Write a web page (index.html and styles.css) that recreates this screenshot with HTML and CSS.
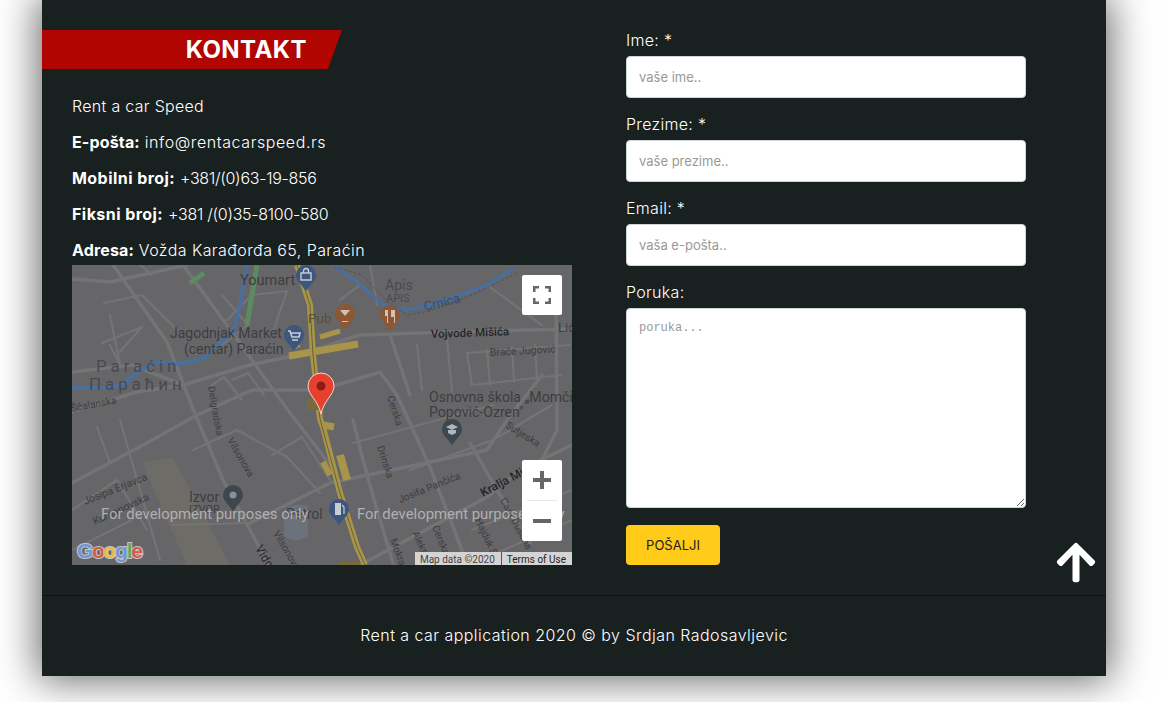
FILE: index.html
```html
<!DOCTYPE html>
<html lang="en">
<head>
  <meta charset="UTF-8" />
  <title>Kontakt - Rent a car Speed</title>
  <link rel="stylesheet" href="styles.css">
</head>
<body>
  <div class="page">
    <div class="content">
      <div class="info-col">
        <h2 class="section-title">KONTAKT</h2>
        <div class="info">
          <p>Rent a car Speed</p>
          <p><b class="tight">E-pošta:</b> <span class="wide">info@rentacarspeed.rs</span></p>
          <p><b>Mobilni broj:</b> <span class="num">+381/(0)63-19-856</span></p>
          <p><b>Fiksni broj:</b> <span class="num">+381 /(0)35-8100-580</span></p>
          <p><b class="tight">Adresa:</b> <span class="addr">Vožda Karađorđa 65, Paraćin</span></p>
          <div class="map">
            <svg class="map-canvas" width="500" height="300" viewBox="0 0 500 300">
              <rect width="500" height="300" fill="#666668"/>
              <path d="M70 198L101 192L158 300H115Z" fill="#6e6c67"/>
              <path d="M212 245q12-8 24-4l0 30q-14 8-24 0Z" fill="#6c727c"/>

              <g fill="none" stroke="#747476" stroke-linecap="round" stroke-linejoin="round">
                <g stroke-width="3.5">
                  <path d="M0 14L38 17L115 0"/>
                  <path d="M111 0L165 74L215 144L262 205"/>
                  <path d="M41 0L95 77L121 144L151 215L185 278L195 300"/>
                  <path d="M0 107L60 100L111 120L178 100L225 90L288 70L381 67L498 64"/>
                  <path d="M0 147L65 127L111 120"/>
                  <path d="M0 218L75 178L125 150L180 125L248 125"/>
                  <path d="M248 125L308 107L325 130L358 202L391 288"/>
                  <path d="M178 258L258 218L415 185L435 155L470 110"/>
                  <path d="M281 155L291 195L305 245L321 298"/>
                  <path d="M288 300L415 232L448 205L500 180"/>
                  <path d="M484 25L485 165L460 215"/>
                  <path d="M398 178L425 225L458 278"/>
                  <path d="M318 70L338 130"/>
                </g>
                <g stroke-width="2.2">
                  <path d="M32 38L70 30L105 65M38 50L48 100L38 80M30 78L70 62L45 90"/>
                  <path d="M25 162L38 198M48 155L88 295M0 245L45 215L75 265M0 285L60 255"/>
                  <path d="M150 30L176 60L150 80M155 55L180 30L215 26L200 70"/>
                  <path d="M140 120L152 112L170 135M160 115L176 108L192 130"/>
                  <path d="M165 165L215 192L248 228M121 185L165 165"/>
                  <path d="M200 190L230 172L258 215"/>
                  <path d="M345 80L350 125M375 75L380 127M395 88L400 120L490 110M395 88L498 80"/>
                  <path d="M415 85L418 120M440 82L442 117M463 80L465 113"/>
                  <path d="M281 178L421 140M338 205L421 175L480 140"/>
                  <path d="M100 260L178 258M68 0L80 10M298 0L305 40M415 20L470 60"/>
                  <path d="M270 5L288 20L268 35M400 265L500 225M420 290L500 255"/>
                </g>
              </g>

              <path d="M175 0L168 40L161 67L148 77L131 94L108 99L85 97L65 107L51 120L31 123H0" fill="none" stroke="#4a6f9c" stroke-width="4"/>
              <path d="M261 0L285 17L311 40L335 45L358 40L388 30L415 20L441 4" fill="none" stroke="#4a6f9c" stroke-width="3.5"/>
              <path d="M262 2L290 10L316 37L336 50L358 46L400 30L445 8" fill="none" stroke="#4d4d50" stroke-width="0.8" stroke-dasharray="3 2"/>
              <path d="M185 0L180 30L175 60" fill="none" stroke="#5c8a63" stroke-width="5"/>
              <path d="M118 18L132 8" fill="none" stroke="#5c8a63" stroke-width="5"/>

              <g fill="none" stroke="#a8954a">
                <path d="M225 0L238 40L241 90L248 154L251 162L268 228L285 282L293 300" stroke-width="6"/>
                <path d="M217 91L286 79" stroke-width="7"/>
                <path d="M248 72L268 66" stroke-width="5"/>
                <path d="M218 70L226 83" stroke-width="6"/>
                <path d="M252 160L262 162" stroke-width="7"/>
                <path d="M268 190L275 215" stroke-width="8"/>
                <path d="M251 197L258 210" stroke-width="6"/>
              </g>
              <path d="M225 0L238 40L241 90L248 154L268 228L285 282L293 300" fill="none" stroke="#6d6238" stroke-width="1"/>
              <rect x="235" y="133" width="12" height="12" fill="#7a6a3a"/>
              <rect x="268" y="297" width="20" height="3" fill="#7a6a3a"/>

              <g font-family="Roboto, sans-serif" fill="#3d3d40">
                <text x="168" y="20" font-size="14.5">Youmart</text>
                <text x="98" y="73" font-size="14">Jagodnjak Market</text>
                <text x="112" y="89" font-size="14">(centar) Paraćin</text>
                <text x="236" y="58" font-size="13.5" fill="#5a5230">Pub</text>
                <text x="313" y="25" font-size="14" fill="#4a4a4d">Apis</text>
                <text x="314" y="37" font-size="11" fill="#4a4a4d">APIS</text>
                <text x="353" y="46" font-size="13" fill="#2f4f78" transform="rotate(-14 353 46)">Crnica</text>
                <text x="359" y="73" font-size="11.5" font-weight="500" fill="#252528" transform="rotate(-2 359 73)">Vojvode Mišića</text>
                <text x="418" y="91" font-size="10.5" transform="rotate(-3 418 91)">Braće Jugović</text>
                <text x="486" y="67" font-size="13">Lić</text>
                <text x="357" y="137" font-size="14.1">Osnovna škola „Momčilo</text>
                <text x="357" y="152" font-size="14.1">Popović-Ozren"</text>
                <text x="117" y="237" font-size="14">Izvor</text>
                <text x="117" y="248" font-size="11">IZVOR</text>
                <text x="214" y="254" font-size="14">Petrol</text>
                <text x="0" y="147" font-size="10" transform="rotate(-11 0 147)">Ščalanska</text>
                <text x="13" y="240" font-size="10.5" transform="rotate(-22 13 240)">Josipa Erjavca</text>
                <text x="23" y="260" font-size="10.5" transform="rotate(-25 23 260)">Kumanovska</text>
                <text x="136" y="122" font-size="9.5" transform="rotate(80 136 122)">Deligradska</text>
                <text x="155" y="175" font-size="10" transform="rotate(60 155 175)">Vilsonova</text>
                <text x="201" y="268" font-size="10" transform="rotate(60 201 268)">Vilsonova</text>
                <text x="183" y="283" font-size="12" fill="#252528" transform="rotate(60 183 283)">Vidov</text>
                <text x="315" y="132" font-size="10" transform="rotate(72 315 132)">Cerska</text>
                <text x="305" y="182" font-size="10" transform="rotate(72 305 182)">Drinska</text>
                <text x="328" y="238" font-size="10" transform="rotate(-22 328 238)">Josifa Pančića</text>
                <text x="433" y="162" font-size="10" transform="rotate(32 433 162)">Sutjeska</text>
                <text x="411" y="232" font-size="12" font-weight="500" fill="#252528" transform="rotate(-28 411 232)">Kralja Mi</text>
                <text x="360" y="262" font-size="10" transform="rotate(68 360 262)">Cerska</text>
                <text x="340" y="268" font-size="10" transform="rotate(65 340 268)">Aleksa</text>
                <text x="318" y="275" font-size="10" transform="rotate(70 318 275)">Mokra</text>
                <text x="403" y="255" font-size="10" transform="rotate(65 403 255)">Hajduk Sta</text>
                <text x="428" y="235" font-size="10" transform="rotate(62 428 235)">Cara Dušana</text>
              </g>
              <g font-family="Roboto, sans-serif" fill="#4a4a4d" font-size="17" letter-spacing="3.9">
                <text x="24" y="107">Paraćin</text>
                <text x="17" y="125">Параћин</text>
              </g>

              <g id="pois">
                <path d="M234 26c-6-8-10-11-10-16a10 10 0 0 1 20 0c0 5-4 8-10 16Z" fill="#3d5680"/>
                <path d="M229 8h10v7h-10ZM231.500 8v-2a2.500 2.500 0 0 1 5 0v2" fill="none" stroke="#c9ccd2" stroke-width="1.400"/>
                <path d="M222 86c-6-8-10-11-10-16a10 10 0 0 1 20 0c0 5-4 8-10 16Z" fill="#3d5680"/>
                <path d="M216 66h2l2 6h7l1-4h-9M220 75h6" fill="none" stroke="#c9ccd2" stroke-width="1.6"/>
                <path d="M273 65c-6-8-10-11-10-16a10 10 0 0 1 20 0c0 5-4 8-10 16Z" fill="#8d5735"/>
                <path d="M268 45h10l-5 6v5h3v1h-6v-1h3v-5Z" fill="#d3c2b4"/>
                <path d="M318 66c-6-8-10-11-10-16a10 10 0 0 1 20 0c0 5-4 8-10 16Z" fill="#8d5735"/>
                <path d="M313 45v6h2v7h1v-13M319 45h4v13h-1v-6h-3Z" fill="#d3c2b4"/>
                <path d="M380 180c-6-8-10-11-10-16a10 10 0 0 1 20 0c0 5-4 8-10 16Z" fill="#3c474f"/>
                <path d="M374 162l6-3 6 3-6 3ZM376 165v3l4 2 4-2v-3" fill="#b0b6ba"/>
                <path d="M161 246c-6-8-10-11-10-16a10 10 0 0 1 20 0c0 5-4 8-10 16Z" fill="#3c474f"/>
                <circle cx="161" cy="230" r="3.500" fill="#8a8f93"/>
                <path d="M267 260c-6-8-10-11-10-16a10 10 0 0 1 20 0c0 5-4 8-10 16Z" fill="#3d5680"/>
                <rect x="263" y="238" width="6" height="12" fill="#c9ccd2"/>
                <path d="M270 240l2 2v7" fill="none" stroke="#c9ccd2" stroke-width="1.2"/>
              </g>

              <path d="M249 149c-3-14-13-19-13-28a13 13 0 0 1 26 0c0 9-10 14-13 28Z" fill="#e8402f" stroke="#f3d6d0" stroke-width="1"/>
              <circle cx="249" cy="121" r="4.500" fill="#8f1c14"/>

              <g font-family="Roboto, sans-serif" font-size="14.900" fill="#b0b0b1">
                <text x="29" y="254">For development purposes only</text>
                <text x="285" y="254">For development purposes only</text>
              </g>

              <text x="5" y="293" font-family="'Liberation Sans', sans-serif" font-size="21" font-weight="700" letter-spacing="-1.3" stroke="#c5c5c5" stroke-width="2" paint-order="stroke"><tspan fill="#6f97d8">G</tspan><tspan fill="#d9594c">o</tspan><tspan fill="#e9bb3f">o</tspan><tspan fill="#6f97d8">g</tspan><tspan fill="#5da862">l</tspan><tspan fill="#d9594c">e</tspan></text>
            </svg>

            <div class="map-btn map-full">
              <svg width="18" height="18" viewBox="0 0 18 18"><path d="M1.250 6V1.250H6M12 1.250h4.750V6M16.750 12v4.750H12M6 16.750H1.250V12" fill="none" stroke="#666" stroke-width="2.500"/></svg>
            </div>
            <div class="map-btn map-zoom">
              <div class="zoom-part"><svg width="18" height="18" viewBox="0 0 18 18"><path d="M0 9h18M9 0v18" stroke="#666" stroke-width="4"/></svg></div>
              <div class="zoom-part zoom-minus"><svg width="18" height="18" viewBox="0 0 18 18"><path d="M0 9h18" stroke="#666" stroke-width="4"/></svg></div>
            </div>
            <div class="map-credit">
              <span>Map data ©2020</span><span class="terms">Terms of Use</span>
            </div>
          </div>
        </div>
      </div>

      <form class="form-col">
        <div class="form-row">
          <label>Ime: *</label>
          <input type="text" placeholder="vaše ime..">
        </div>
        <div class="form-row">
          <label>Prezime: *</label>
          <input type="text" placeholder="vaše prezime..">
        </div>
        <div class="form-row">
          <label>Email: *</label>
          <input type="text" placeholder="vaša e-pošta..">
        </div>
        <div class="form-row">
          <label>Poruka:</label>
          <textarea placeholder="poruka..."></textarea>
        </div>
        <button type="button" class="send-btn">POŠALJI</button>
      </form>
    </div>

    <a class="to-top" href="#">
      <svg width="40" height="45" viewBox="0 0 448 512"><path fill="#fff" d="M34.9 289.5l-22.2-22.2c-9.4-9.4-9.4-24.6 0-33.9L207 39c9.4-9.4 24.6-9.4 33.9 0l194.3 194.3c9.4 9.4 9.4 24.6 0 33.9L413 289.4c-9.5 9.5-25 9.3-34.3-.4L264 168.6V456c0 13.3-10.7 24-24 24h-32c-13.3 0-24-10.7-24-24V168.6L69.2 289.1c-9.3 9.8-24.8 10-34.3.4z"/></svg>
    </a>

    <div class="footer">Rent a car application 2020 © by Srdjan Radosavljevic</div>
  </div>
</body>
</html>
```

FILE: styles.css
```css
html, body {
  margin: 0;
  padding: 0;
}

body {
  background: #fff;
  height: 702px;
  overflow: hidden;
  font-family: Inter, 'Open Sans', sans-serif;
  color: #fff;
}

.page {
  position: relative;
  width: 1064px;
  height: 676px;
  margin-left: 42px;
  background: #192020;
  box-shadow: 0 0 38px 4px rgba(0, 0, 0, 0.6);
  display: flex;
  flex-direction: column;
}

.content {
  flex: 1;
  display: flex;
}

.info-col {
  width: 584px;
  padding-top: 30px;
}

.section-title {
  margin: 0 0 25px;
  width: 265px;
  height: 39px;
  padding-right: 35px;
  line-height: 39px;
  text-align: right;
  font-size: 24px;
  font-weight: 700;
  letter-spacing: 0.45px;
  background: #b00500;
  clip-path: polygon(0 0, 100% 0, 95.3% 100%, 0 100%);
}

.info {
  padding-left: 30px;
}

.info p {
  margin: 0 0 12px;
  font-size: 16px;
  line-height: 24px;
  font-weight: 300;
  letter-spacing: 0.3px;
}

.info p:last-of-type {
  margin-bottom: 3px;
}

.info b {
  font-weight: 700;
  letter-spacing: 0.45px;
}

.info b.tight {
  letter-spacing: 0.15px;
}

.info .wide {
  letter-spacing: 0.58px;
}

.info .addr {
  letter-spacing: 0.42px;
}

.info .num {
  letter-spacing: -0.27px;
}

.map {
  position: relative;
  width: 500px;
  height: 300px;
  overflow: hidden;
}

.map-canvas {
  display: block;
}

.map-btn {
  position: absolute;
  left: 450px;
  width: 40px;
  background: #fff;
  border-radius: 2px;
}

.map-full {
  top: 10px;
  height: 40px;
  display: flex;
  align-items: center;
  justify-content: center;
}

.map-zoom {
  top: 195px;
  height: 81px;
}

.zoom-part {
  height: 40px;
  display: flex;
  align-items: center;
  justify-content: center;
}

.zoom-minus {
  height: 40px;
  margin: 0 5px;
  border-top: 1px solid #e6e6e6;
}

.map-credit {
  position: absolute;
  right: 0;
  bottom: 0;
  height: 13px;
  display: flex;
  background: #d4d4d4;
  font-family: Roboto, sans-serif;
  font-size: 10px;
  line-height: 16px;
  color: #444;
}

.map-credit span {
  padding: 0 6px 0 5px;
}

.map-credit .terms {
  border-left: 1px solid #555;
  color: #222;
}

.form-col {
  width: 400px;
  padding-top: 28px;
}

.form-row {
  margin-bottom: 14px;
}

.form-row label {
  display: block;
  margin-bottom: 4px;
  font-size: 16px;
  line-height: 24px;
  font-weight: 300;
  letter-spacing: 0.3px;
}

.form-row input,
.form-row textarea {
  display: block;
  width: 100%;
  box-sizing: border-box;
  margin: 0;
  background: #fff;
  border: 1px solid #ced4da;
  border-radius: 4px;
  padding: 0 12px;
}

.form-row input {
  height: 42px;
  font-family: Inter, sans-serif;
  font-size: 13px;
}

.form-row textarea {
  height: 200px;
  padding-top: 12px;
  font-family: 'Liberation Mono', monospace;
  font-size: 12px;
}

::placeholder {
  color: #999;
  opacity: 1;
}

.send-btn {
  display: block;
  width: 94px;
  height: 40px;
  margin-top: 17px;
  border: none;
  border-radius: 4px;
  background: #ffca18;
  color: #212121;
  font-family: Inter, sans-serif;
  font-size: 13px;
}

.to-top {
  position: absolute;
  left: 1014px;
  top: 540px;
  line-height: 0;
}

.footer {
  height: 78px;
  padding-bottom: 2px;
  border-top: 1px solid #0e1313;
  display: flex;
  align-items: center;
  justify-content: center;
  font-size: 16px;
  font-weight: 300;
  letter-spacing: 0.45px;
}
```
